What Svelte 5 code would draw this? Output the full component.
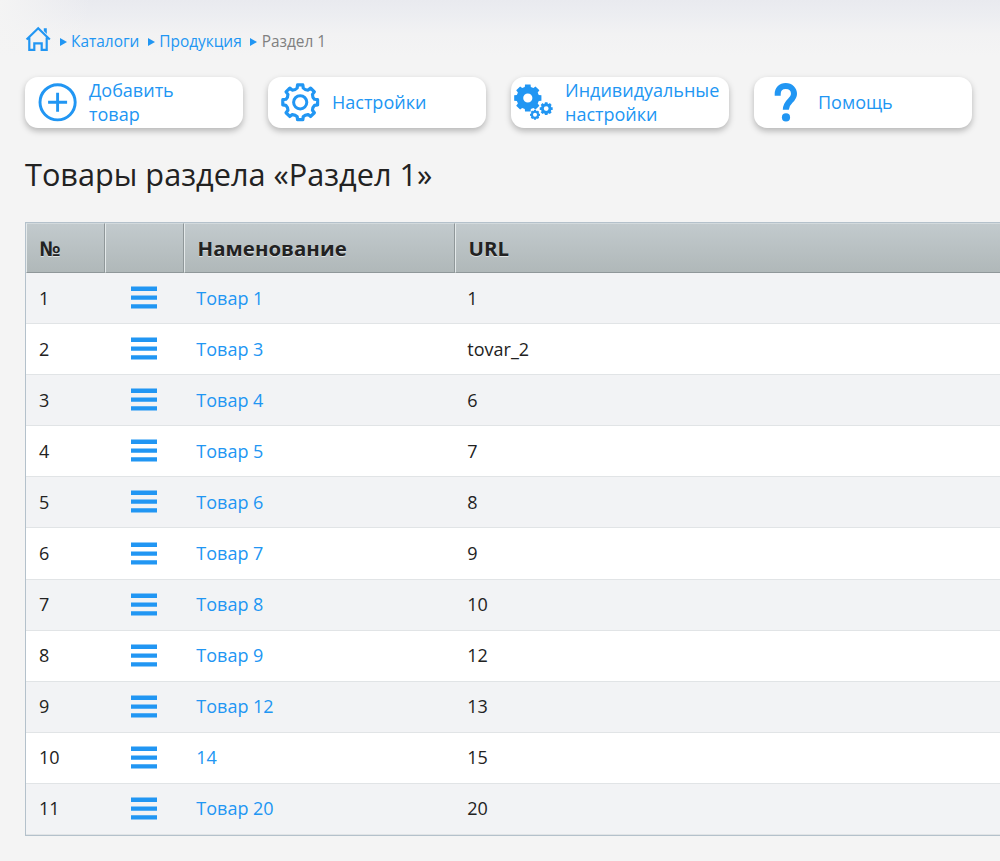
<script>
  const rows = [
    ['Товар 1', '1'],
    ['Товар 3', 'tovar_2'],
    ['Товар 4', '6'],
    ['Товар 5', '7'],
    ['Товар 6', '8'],
    ['Товар 7', '9'],
    ['Товар 8', '10'],
    ['Товар 9', '12'],
    ['Товар 12', '13'],
    ['14', '15'],
    ['Товар 20', '20'],
  ];

  // Closed outline of an eight-toothed gear; a and b are the half-angles of a tooth's tip and base.
  function gear(cx, cy, outer, inner, a = 0.17, b = 0.25, dip = 0.98) {
    const p = (r, t) => `${(cx + r * Math.cos(t)).toFixed(2)} ${(cy + r * Math.sin(t)).toFixed(2)}`;
    let d = '';
    for (let i = 0; i < 8; i++) {
      const t = (i * Math.PI) / 4;
      const mid = t + Math.PI / 8;
      d += `${i ? 'L' : 'M'}${p(inner, t - b)}L${p(outer, t - a)}L${p(outer, t + a)}L${p(inner, t + b)}`;
      d += `Q${p(inner * dip, mid)} ${p(inner, t + Math.PI / 4 - b)}`;
    }
    return d + 'Z';
  }
</script>

<main>
  <nav>
    <svg class="home" width="26" height="26" viewBox="0 0 26 26">
      <path d="M1.6 13.5 13.2 2.2l11.6 11.3M4.3 11.5v12.4h5V17.4h7.4v6.5h5V11.5" fill="none" stroke="#2196f3" stroke-width="2.2" />
      <path d="M18.8 2.2h3V8L18.8 5Z" fill="#2196f3" />
    </svg>
    <i class="arrow"></i><a href="#catalogs">Каталоги</a>
    <i class="arrow"></i><a href="#products">Продукция</a>
    <i class="arrow"></i><span>Раздел 1</span>
  </nav>

  <div class="actions">
    <button>
      <svg width="40" height="40" viewBox="0 0 40 40" fill="none" stroke="#2196f3">
        <circle cx="20.6" cy="20.3" r="17.6" stroke-width="2.9" />
        <path d="M20.6 10.8v19M11.1 20.3h19" stroke-width="2.9" />
      </svg>
      <span>Добавить<br />товар</span>
    </button>
    <button>
      <svg width="40" height="40" viewBox="0 0 40 40" fill="none" stroke="#2196f3">
        <path d={gear(20.2, 20.3, 17.6, 14.6, 0.15, 0.21, 0.9)} stroke-width="3.2" stroke-linejoin="round" />
        <circle cx="20.2" cy="20.3" r="6.6" stroke-width="3" />
      </svg>
      <span>Настройки</span>
    </button>
    <button class="wide">
      <svg width="40" height="40" viewBox="0 0 40 40" fill="#2196f3" fill-rule="evenodd">
        <path d={gear(14.8, 16, 13.9, 11.4, 0.2, 0.27) + 'M10.2 16a4.6 4.6 0 1 0 9.2 0a4.6 4.6 0 1 0-9.2 0Z'} />
        <path d={gear(33.2, 26.6, 6.6, 5.3, 0.2, 0.28) + 'M30.8 26.6a2.4 2.4 0 1 0 4.8 0a2.4 2.4 0 1 0-4.8 0Z'} />
        <path d={gear(22, 32.8, 5.1, 4.2, 0.2, 0.28) + 'M20 32.8a2 2 0 1 0 4 0a2 2 0 1 0-4 0Z'} />
      </svg>
      <span>Индивидуальные<br />настройки</span>
    </button>
    <button>
      <svg width="40" height="40" viewBox="0 0 40 40">
        <path d="M11.7 13.8V12C11.7 7.2 15 4 19.7 4C24.7 4 28 7.5 28 12C28 18.6 19.8 19 19.8 27.8" fill="none" stroke="#2196f3" stroke-width="6" />
        <circle cx="20" cy="35.4" r="4.1" fill="#2196f3" />
      </svg>
      <span>Помощь</span>
    </button>
  </div>

  <h1>Товары раздела «Раздел 1»</h1>

  <table>
    <colgroup><col class="c1" /><col class="c2" /><col class="c3" /><col /></colgroup>
    <thead>
      <tr><th>№</th><th></th><th>Наменование</th><th>URL</th></tr>
    </thead>
    <tbody>
      {#each rows as [name, url], i}
        <tr>
          <td>{i + 1}</td>
          <td>
            <svg class="menu" width="26" height="23" viewBox="0 0 26 23" fill="#2196f3">
              <path d="M0 .6h26v4.4H0zM0 9.6h26v4.2H0zM0 18.2h26v4.4H0z" />
            </svg>
          </td>
          <td><a href="#item">{name}</a></td>
          <td>{url}</td>
        </tr>
      {/each}
    </tbody>
  </table>
</main>

<style>
  :global(body) {
    background: #f4f4f4;
    overflow: hidden;
  }
  main {
    box-sizing: border-box;
    height: 861px;
    padding: 26px 0 0 25px;
    overflow: hidden;
    font-family: 'Open Sans', sans-serif;
    color: #222;
    background:
      linear-gradient(100deg, #f4f4f4 0, #f4f4f400 90px) no-repeat 0 0 / 100% 60px,
      linear-gradient(#e9eaef 0, #ecedf1 14px, #f2f2f3 34px, #f4f4f4 56px) no-repeat,
      #f4f4f4;
  }
  a {
    color: #2196f3;
    text-decoration: none;
  }
  nav {
    display: flex;
    align-items: center;
    height: 30px;
    font-size: 15.4px;
    color: #808080;
    white-space: nowrap;
  }
  .home {
    margin-top: -4px;
    margin-right: 0.6px;
  }
  .arrow {
    margin: 2px 4.5px 0 8.5px;
    border-left: 7px solid #2196f3;
    border-top: 4px solid transparent;
    border-bottom: 4px solid transparent;
  }
  .arrow:first-of-type {
    margin-left: 8px;
  }
  .actions {
    display: flex;
    gap: 25px;
    margin-top: 20.6px;
  }
  button {
    display: flex;
    align-items: center;
    box-sizing: border-box;
    flex: none;
    width: 218px;
    height: 51px;
    padding: 0 0 0 12px;
    border: 0;
    border-radius: 13px;
    background: #fff;
    box-shadow: 0 3px 6px rgba(0, 0, 0, 0.26);
    font: 18px/24px 'Open Sans', sans-serif;
    color: #2196f3;
    text-align: left;
    white-space: nowrap;
  }
  button svg {
    flex: none;
    margin: -1px 12px 0 0;
  }
  button span {
    padding-bottom: 1px;
  }
  .wide {
    padding-left: 2px;
  }
  h1 {
    margin: 23.4px 0 25px;
    font-size: 30.7px;
    line-height: 46px;
    font-weight: 400;
  }
  table {
    width: 1100px;
    table-layout: fixed;
    border-collapse: separate;
    border-spacing: 0;
    border: 1px solid #b4c1cb;
    background: #fff;
    font-size: 18px;
    line-height: 24px;
  }
  .c1 {
    width: 79px;
  }
  .c2 {
    width: 79px;
  }
  .c3 {
    width: 271px;
  }
  th {
    box-sizing: border-box;
    height: 50px;
    padding: 0 0 0 12.5px;
    border: solid;
    border-width: 1px 1px 1px 1px;
    border-color: #d3dadd #8f9799 #8f9799 #e4e9ea;
    background: linear-gradient(#c2cacd, #b0b8b9);
    font-size: 20.4px;
    letter-spacing: 0.05px;
    text-align: left;
    text-shadow: 0 1px #dde3e4;
  }
  td {
    box-sizing: border-box;
    height: 51.1px;
    padding: 0 0 1px 12.3px;
    border-bottom: 1px solid #e1e4e6;
  }
  td:first-child {
    padding-left: 13px;
  }
  tr:nth-child(odd) td {
    background: #f2f3f5;
  }
  .menu {
    display: block;
    margin-left: 13.6px;
  }
</style>
